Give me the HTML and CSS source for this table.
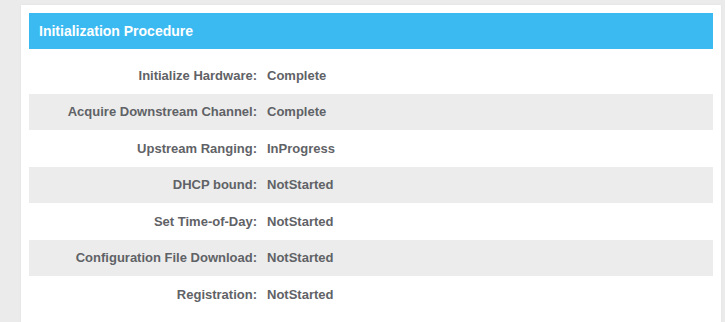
FILE: index.html
```html
<!DOCTYPE html>
<html>
<head>
<meta charset="utf-8">
<link rel="stylesheet" href="styles.css">
</head>
<body>
<div class="card">
  <div class="card-header">Initialization Procedure</div>
  <div class="table">
    <div class="row"><div class="label">Initialize Hardware:</div><div class="value">Complete</div></div>
    <div class="row alt"><div class="label">Acquire Downstream Channel:</div><div class="value">Complete</div></div>
    <div class="row"><div class="label">Upstream Ranging:</div><div class="value">InProgress</div></div>
    <div class="row alt"><div class="label">DHCP bound:</div><div class="value">NotStarted</div></div>
    <div class="row"><div class="label">Set Time-of-Day:</div><div class="value">NotStarted</div></div>
    <div class="row alt"><div class="label">Configuration File Download:</div><div class="value">NotStarted</div></div>
    <div class="row"><div class="label">Registration:</div><div class="value">NotStarted</div></div>
  </div>
</div>
</body>
</html>
```
FILE: styles.css
```css
html, body {
  margin: 0;
  height: 100%;
}
body {
  background: #ebebeb;
  padding: 5px 4px 0 21px;
  box-sizing: border-box;
  font-family: "Liberation Sans", Arial, sans-serif;
  overflow: hidden;
}
.card {
  background: #fff;
  padding: 8px 8px 9px 8px;
  box-shadow: 0 0 2px rgba(0,0,0,0.06);
}
.card-header {
  background: #3bbaf2;
  color: #fff;
  font-weight: bold;
  font-size: 14px;
  height: 36px;
  line-height: 36px;
  padding-left: 10px;
}
.table {
  margin-top: 8px;
}
.row {
  display: grid;
  grid-template-columns: 238px 1fr;
  height: 36.5px;
  align-items: center;
  font-size: 13px;
  font-weight: bold;
  color: #5f6266;
}
.row.alt {
  background: #ececec;
}
.label {
  text-align: right;
  padding-right: 10px;
}
```
